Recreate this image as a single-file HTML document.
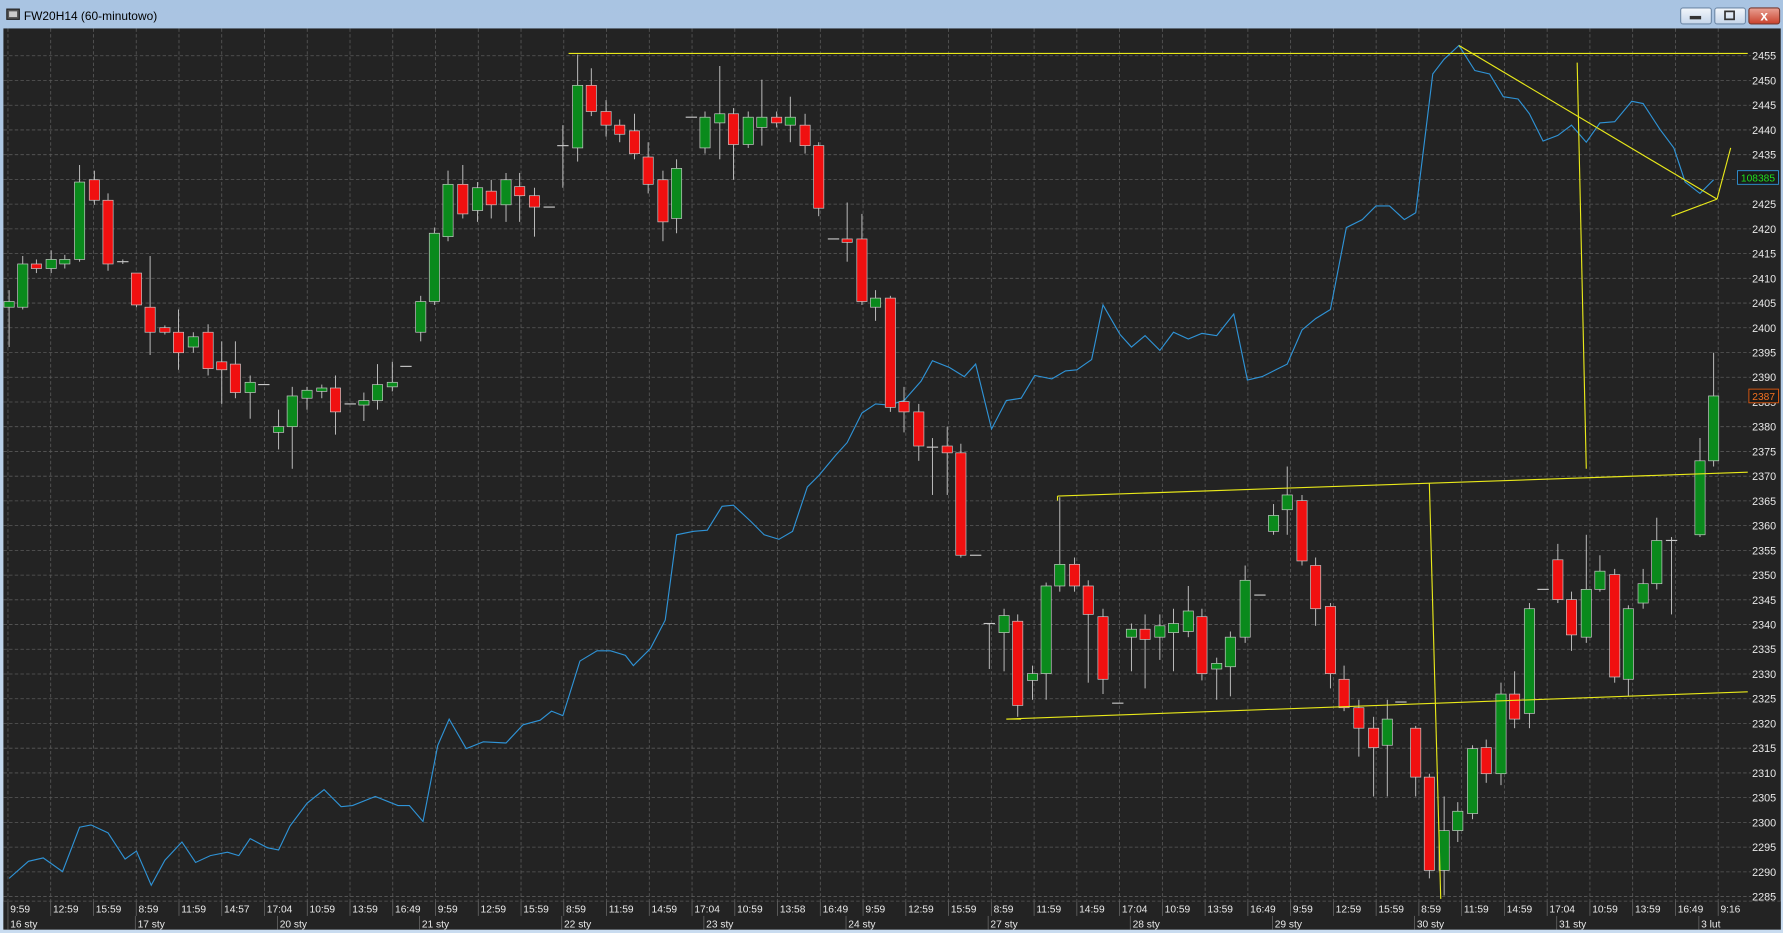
<!DOCTYPE html>
<html><head><meta charset="utf-8"><style>
html,body{margin:0;padding:0;width:1783px;height:933px;overflow:hidden;background:#b9d1ea}
svg{display:block}
</style></head><body>
<svg id="s" width="1783" height="933" viewBox="0 0 1568 820" preserveAspectRatio="none" xmlns="http://www.w3.org/2000/svg" font-family="Liberation Sans, sans-serif">
<defs><linearGradient id="tb" x1="0" y1="0" x2="0" y2="1"><stop offset="0" stop-color="#a9c4e2"/><stop offset="1" stop-color="#c9dcf0"/></linearGradient>
<linearGradient id="bt" x1="0" y1="0" x2="0" y2="1"><stop offset="0" stop-color="#f2f6fb"/><stop offset="1" stop-color="#c6d6ea"/></linearGradient>
<linearGradient id="bx" x1="0" y1="0" x2="0" y2="1"><stop offset="0" stop-color="#e9a294"/><stop offset="1" stop-color="#c9412c"/></linearGradient></defs>
<rect x="0" y="0" width="1568" height="820" fill="url(#tb)"/>
<rect x="6" y="8" width="11" height="9" fill="#555" stroke="#222" stroke-width="1"/>
<rect x="8" y="10" width="7" height="5" fill="#ccc"/>
<text x="21" y="17.5" font-size="10.5" fill="#000">FW20H14 (60-minutowo)</text>
<rect x="1478" y="7" width="27" height="14" rx="2" fill="url(#bt)" stroke="#6f8aa8"/>
<rect x="1486" y="14" width="10" height="3" fill="#333"/>
<rect x="1508" y="7" width="27" height="14" rx="2" fill="url(#bt)" stroke="#6f8aa8"/>
<rect x="1517" y="10" width="8" height="7" fill="none" stroke="#333" stroke-width="1.5"/>
<rect x="1538" y="7" width="27" height="14" rx="2" fill="url(#bx)" stroke="#7a3a30"/>
<text x="1551.5" y="18" font-size="12" font-weight="bold" fill="#fff" text-anchor="middle">x</text>
<rect x="3" y="25" width="1563" height="792" fill="#232323"/>
<g id="g"></g>
</svg>
<script>
var g=document.getElementById('g'),h='';
function yp(p){return 49+(2455-p)*4.347;}
// grid
for(var k=0;k<41;k++){var x=7+37.6*k;h+='<line x1="'+x+'" y1="25" x2="'+x+'" y2="805" stroke="#5a5a5a" stroke-width="0.7" stroke-dasharray="3,2"/>';}
for(var p=2285;p<=2455;p+=5){var y=yp(p);h+='<line x1="3" y1="'+y+'" x2="1540" y2="'+y+'" stroke="#5a5a5a" stroke-width="0.7" stroke-dasharray="3,2"/>';
h+='<text x="1562" y="'+(y+3.5)+'" font-size="9.5" fill="#e8e8e8" text-anchor="end">'+p+'</text>';}
// blue line
var bl=[[8,772],[25,757],[38,754],[55,766],[70,727],[80,725],[95,732],[110,755],[120,748],[133,778],[145,756],[160,740],[172,758],[185,752],[200,749],[210,752],[220,737],[235,745],[245,747],[255,726],[270,706],[285,694],[300,709],[310,708],[330,700],[350,708],[360,708],[372,722],[385,655],[395,632],[410,658],[425,652],[445,653],[460,637],[475,633],[485,625],[495,629],[510,581],[525,572],[537,572],[550,576],[557,585],[572,570],[585,545],[595,470],[610,467],[622,466],[635,445],[645,444],[660,458],[672,470],[685,474],[697,467],[710,428],[720,418],[735,400],[745,389],[758,363],[770,355],[782,356],[795,352],[810,335],[820,317],[835,323],[848,331],[858,320],[872,377],[885,352],[898,350],[910,330],[925,333],[937,326],[947,325],[960,316],[970,268],[985,294],[995,305],[1007,295],[1020,308],[1032,292],[1045,298],[1057,293],[1070,295],[1085,276],[1097,334],[1110,331],[1122,325],[1132,320],[1145,290],[1157,280],[1170,272],[1184,200],[1198,193],[1210,181],[1222,181],[1235,193],[1245,187],[1260,65],[1270,52],[1283,40],[1297,62],[1310,65],[1322,85],[1335,87],[1345,100],[1357,124],[1370,119],[1382,110],[1395,125],[1407,108],[1420,107],[1435,89],[1445,91],[1460,114],[1472,130],[1482,160],[1495,170],[1507,158]];
h+='<polyline fill="none" stroke="#2f93d6" stroke-width="1" points="'+bl.map(function(a){return a.join(',')}).join(' ')+'"/>';
// candles x,o,c,hi,lo (y px)
var c=[[8,270,265,255,305],[20,270,232,225,272],[32,232,236,228,240],[45,236,228,220,240],[57,232,228,224,236],[70,228,160,145,230],[83,158,176,150,180],[95,176,232,170,238],[108,230,230,228,232],[120,240,268,240,270],[132,270,292,225,312],[145,288,292,286,294],[157,292,310,272,325],[170,305,296,292,310],[183,292,324,285,330],[195,318,325,300,355],[207,320,345,300,350],[220,345,336,330,368],[232,338,338,338,338],[245,380,375,360,395],[257,375,348,340,412],[270,350,343,340,360],[283,344,341,338,350],[295,341,362,330,382],[308,355,355,355,355],[320,356,352,345,370],[332,352,338,320,360],[345,340,336,318,344],[357,322,322,322,322],
[370,292,265,260,300],[382,265,205,200,268],[394,208,162,150,212],[407,162,188,145,192],[420,185,165,160,195],[432,168,180,158,192],[445,180,158,152,195],[457,164,172,152,195],[470,172,182,165,208],[483,182,182,182,182],
[495,128,128,110,165],[508,130,75,48,142],[520,75,98,60,102],[533,98,110,88,120],[545,110,118,105,125],[558,115,135,100,140],[570,138,162,125,170],[583,158,195,150,212],[595,192,148,140,205],[608,103,103,103,103],[620,130,103,98,135],[633,108,100,58,140],[645,100,127,95,158],[658,127,103,98,130],[670,112,103,70,128],[683,103,108,98,112],[695,110,103,85,125],[708,110,128,100,135],[720,128,183,125,190],[733,210,210,210,210],[745,210,213,178,230],[758,210,265,188,268],[770,270,262,255,282],[783,262,358,260,362],[795,353,362,340,380],[808,362,392,355,405],[820,393,393,385,435],[833,392,398,375,435],[845,398,488,390,490],[858,488,488,488,488],
[870,548,548,548,588],[883,556,541,535,590],[895,546,620,540,630],[908,598,592,585,615],[920,592,515,512,615],[932,515,496,437,520],[945,496,515,490,520],[957,515,540,510,600],[970,542,597,535,610],[983,618,618,618,618],[995,560,553,548,590],[1007,553,562,540,605],[1020,560,550,540,580],[1032,556,548,535,590],[1045,555,537,515,560],[1057,542,592,535,598],[1070,588,583,578,615],[1082,586,560,555,612],[1095,560,510,497,565],[1108,523,523,523,523],[1120,467,453,443,470],[1132,448,435,410,470],[1145,440,493,435,497],[1157,497,535,490,550],[1170,533,592,530,605],[1182,597,622,585,625],[1195,622,640,615,665],[1208,640,657,630,700],[1220,655,632,615,700],[1232,617,617,617,617],
[1245,640,683,638,700],[1257,683,765,680,772],[1270,765,730,700,787],[1282,730,713,705,740],[1295,715,658,655,720],[1307,657,680,650,688],[1320,680,610,600,690],[1332,610,632,590,640],[1345,627,535,530,640],[1357,518,518,518,518],[1370,492,527,478,530],[1382,527,558,520,572],[1395,560,518,470,565],[1407,518,502,488,520],[1420,505,595,500,600],[1432,597,535,532,612],[1445,530,513,500,535],[1457,513,475,455,518],[1470,475,475,472,540],[1495,470,405,385,472],[1507,405,348,310,410]];
c.forEach(function(a){var x=a[0],o=a[1],cl=a[2],t=Math.min(o,cl),b=Math.max(o,cl);
h+='<line x1="'+x+'" y1="'+a[3]+'" x2="'+x+'" y2="'+a[4]+'" stroke="#c8c8c8" stroke-width="0.8"/>';
if(b-t<1.5){h+='<line x1="'+(x-5)+'" y1="'+t+'" x2="'+(x+5)+'" y2="'+t+'" stroke="#c8c8c8" stroke-width="1"/>';}
else h+='<rect x="'+(x-4.5)+'" y="'+t+'" width="9" height="'+(b-t)+'" fill="'+(cl<o?'#0a8a1c':'#f01010')+'" stroke="#c8c8c8" stroke-width="0.6"/>';});
// yellow lines
[[500,47,1537,47],[1283,40,1510,175],[1387,55,1395,412],[1470,190,1510,175],[1510,175,1522,130],[930,436,1537,415],[885,632,1537,608],[1257,425,1267,790],[930,436,930,440],[885,632,898,632]].forEach(function(l){
h+='<line x1="'+l[0]+'" y1="'+l[1]+'" x2="'+l[2]+'" y2="'+l[3]+'" stroke="#e8e81a" stroke-width="1"/>';});
// axis boxes
h+='<rect x="1528" y="150" width="36" height="12" fill="#1a1a1a" stroke="#2f93d6" stroke-width="0.8"/><text x="1546" y="159.5" font-size="9" fill="#1ee01e" text-anchor="middle">108385</text>';
h+='<rect x="1538" y="342" width="26" height="12" fill="#1a1a1a" stroke="#e05a10" stroke-width="0.8"/><text x="1551" y="351.5" font-size="9" fill="#f07020" text-anchor="middle">2387</text>';
// bottom axis
h+='<rect x="3" y="792" width="1563" height="25" fill="#232323"/>';
h+='<line x1="3" y1="792" x2="1566" y2="792" stroke="#5a5a5a" stroke-width="0.7" stroke-dasharray="3,2"/>';
var tl=['9:59','12:59','15:59','8:59','11:59','14:57','17:04','10:59','13:59','16:49','9:59','12:59','15:59','8:59','11:59','14:59','17:04','10:59','13:58','16:49','9:59','12:59','15:59','8:59','11:59','14:59','17:04','10:59','13:59','16:49','9:59','12:59','15:59','8:59','11:59','14:59','17:04','10:59','13:59','16:49','9:16'];
tl.forEach(function(t,i){var x=7+37.6*i;h+='<line x1="'+x+'" y1="792" x2="'+x+'" y2="805" stroke="#666" stroke-width="0.7"/><text x="'+(x+2)+'" y="802" font-size="9" fill="#e8e8e8">'+t+'</text>';});
var dl=[[7,'16 sty'],[119,'17 sty'],[244,'20 sty'],[369,'21 sty'],[494,'22 sty'],[619,'23 sty'],[744,'24 sty'],[869,'27 sty'],[994,'28 sty'],[1119,'29 sty'],[1244,'30 sty'],[1369,'31 sty'],[1494,'3 lut']];
dl.forEach(function(d){h+='<line x1="'+d[0]+'" y1="805" x2="'+d[0]+'" y2="817" stroke="#666" stroke-width="0.7"/><text x="'+(d[0]+2)+'" y="815" font-size="9" fill="#e8e8e8">'+d[1]+'</text>';});
g.innerHTML=h;
</script>
</body></html>
